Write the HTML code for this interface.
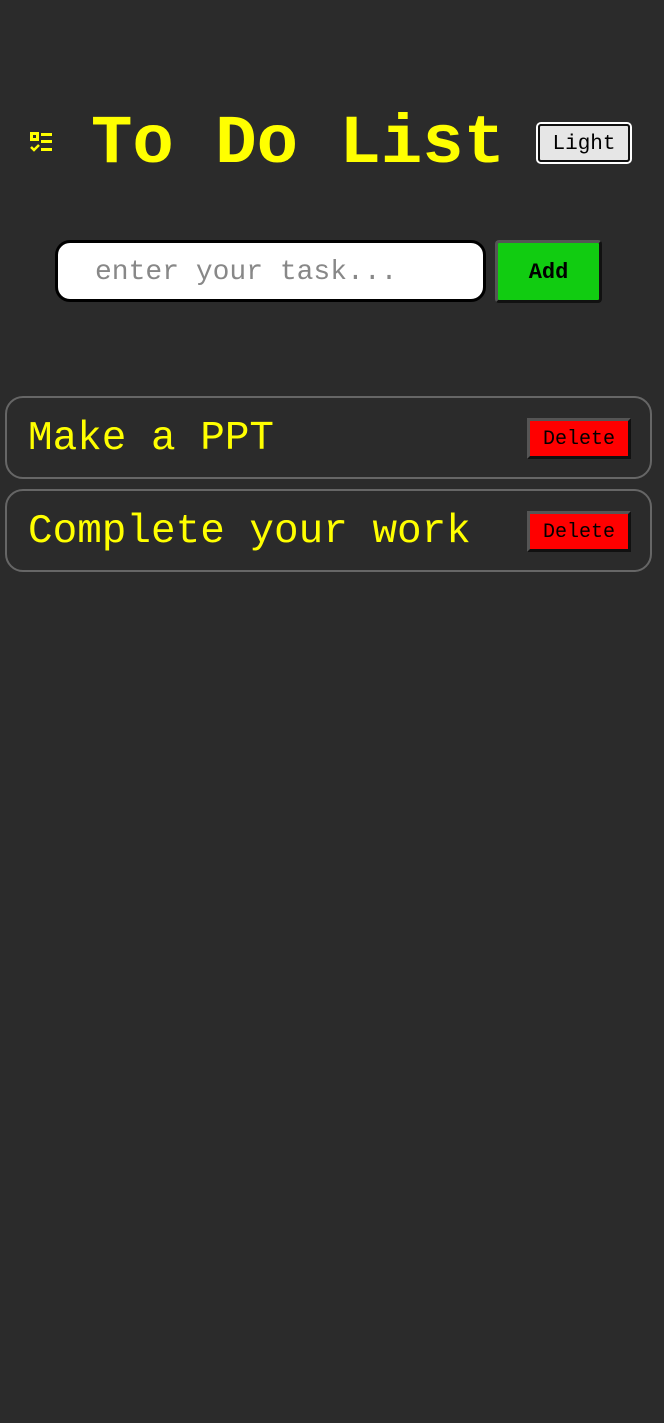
<!DOCTYPE html>
<html><head><style>
body{margin:0;background:#2b2b2b;width:664px;height:1423px;position:relative;font-family:"Liberation Mono",monospace;overflow:hidden}
.a{position:absolute}
h1{position:absolute;left:91px;top:112px;margin:0;font-size:69px;font-weight:bold;color:#ff0;line-height:64px;white-space:pre}
.light{left:536px;top:122px;width:92px;height:38px;border:2px solid #fff;border-radius:5px;}
.light div{position:absolute;inset:0;border:2px solid #111;border-radius:3px;background:#e6e6e6;font-size:21px;text-align:center;line-height:38px;color:#000}
.inp{left:55px;top:240px;height:56px;border:3px solid #000;border-radius:15px;background:#fff;font-size:28px;color:#888;line-height:60px;padding-left:37px;box-sizing:content-box;width:388px}
.add{left:495px;top:240px;width:101px;height:57px;background:#11cc11;border:3px solid;border-color:#555 #111 #111 #555;border-radius:4px;font-size:22px;font-weight:bold;text-align:center;line-height:60px;color:#000}
.card{left:5px;width:643px;height:79px;border:2px solid #666;border-radius:18px;box-sizing:content-box}
.card span{position:absolute;left:21px;top:2px;line-height:79px;font-size:41px;color:#ff0;white-space:pre}
.del{position:absolute;left:520px;top:20px;width:98px;height:35px;background:#f00;border:3px solid;border-color:#555 #111 #111 #555;font-size:20px;text-align:center;line-height:38px;color:#000;box-sizing:content-box}
</style></head><body>
<svg class="a" style="left:29px;top:131px" width="25" height="24" viewBox="0 0 25 24">
<rect x="2.5" y="2.5" width="6" height="6" fill="none" stroke="#ff0" stroke-width="3"/>
<rect x="12" y="2" width="11" height="3" fill="#ff0"/>
<rect x="12" y="9" width="11" height="3" fill="#ff0"/>
<rect x="12" y="17" width="11" height="3" fill="#ff0"/>
<path d="M2 16l3 3 5-5" fill="none" stroke="#ff0" stroke-width="2.5"/>
</svg>
<h1>To Do List</h1>
<div class="a light"><div>Light</div></div>
<div class="a inp">enter your task...</div>
<div class="a add">Add</div>
<div class="a card" style="top:396px"><span>Make a PPT</span><div class="del">Delete</div></div>
<div class="a card" style="top:489px"><span>Complete your work</span><div class="del">Delete</div></div>
</body></html>
